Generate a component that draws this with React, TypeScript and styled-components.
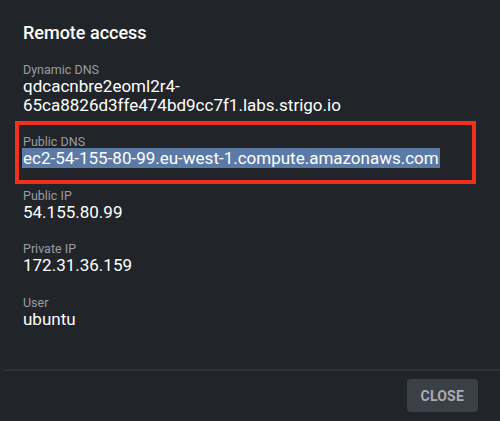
import React from 'react';
import styled, { createGlobalStyle } from 'styled-components';

const FIELDS = [
  { label: 'Dynamic DNS', value: 'qdcacnbre2eoml2r4-65ca8826d3ffe474bd9cc7f1.labs.strigo.io' },
  { label: 'Public DNS', value: 'ec2-54-155-80-99.eu-west-1.compute.amazonaws.com', marked: true },
  { label: 'Public IP', value: '54.155.80.99' },
  { label: 'Private IP', value: '172.31.36.159' },
  { label: 'User', value: 'ubuntu' },
] as const;

const GlobalStyle = createGlobalStyle`
  html, body {
    margin: 0;
    padding: 0;
    background: #212428;
  }
  body {
    font-family: Roboto, "Liberation Sans", sans-serif;
  }
`;

const Dialog = styled.div`
  width: 500px;
  height: 421px;
  display: flex;
  flex-direction: column;
  background: #212428;
  color: #ffffff;
`;

const Body = styled.div`
  flex: 1;
  display: flex;
  flex-direction: column;
  padding: 22px 23px 0;
`;

const Title = styled.h2`
  margin: 0 0 20px;
  font-size: 18px;
  line-height: 21px;
  font-weight: 500;
  color: #ffffff;
`;

const Field = styled.div`
  position: relative;
  margin-bottom: 20.4px;
`;

// annotation frame drawn over the highlighted field
const Marker = styled.div`
  position: absolute;
  top: -14.5px;
  bottom: -15.5px;
  left: -8px;
  right: 1px;
  border: 4px solid #f0311c;
  pointer-events: none;
`;

const Label = styled.div`
  font-size: 12.5px;
  line-height: 14px;
  color: #9a9ea3;
`;

const Value = styled.div`
  font-size: 17px;
  line-height: 19px;
  color: #ffffff;
`;

const Selected = styled.span`
  background: #5b7aa6;
  padding: 0 1px;
  margin-left: -1px;
`;

const Divider = styled.div`
  height: 2px;
  margin-left: 3px;
  background: #2d3035;
`;

const Footer = styled.div`
  display: flex;
  justify-content: flex-end;
  padding: 8px 22px 9px;
`;

const Button = styled.button`
  height: 33px;
  padding: 0 14px;
  border: none;
  border-radius: 4px;
  background: #3b3f46;
  color: #a9acb1;
  font-family: Roboto, "Liberation Sans", sans-serif;
  font-size: 14px;
  font-weight: 700;
  letter-spacing: 0.2px;
  cursor: pointer;
`;

const App: React.FC = () => (
  <>
    <GlobalStyle />
    <Dialog>
      <Body>
        <Title>Remote access</Title>
        {FIELDS.map((f) => (
          <Field key={f.label}>
            <Label>{f.label}</Label>
            <Value>{'marked' in f ? <Selected>{f.value}</Selected> : f.value}</Value>
            {'marked' in f && <Marker />}
          </Field>
        ))}
      </Body>
      <Divider />
      <Footer>
        <Button>CLOSE</Button>
      </Footer>
    </Dialog>
  </>
);

export default App;
